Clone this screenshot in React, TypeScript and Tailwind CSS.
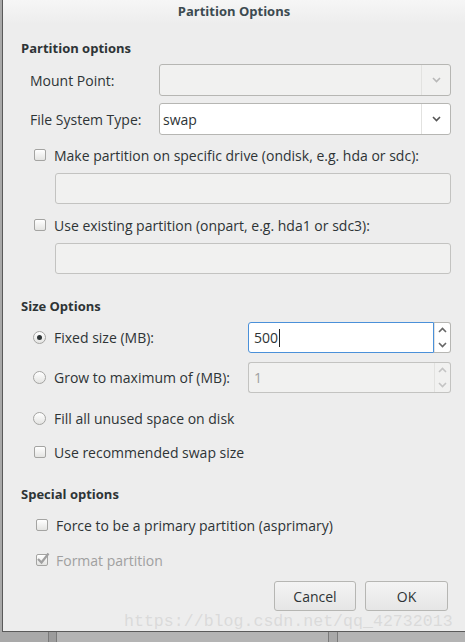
import React from "react"

const font = { fontFamily: "'Open Sans', 'Noto Sans', sans-serif" }

function Chevron({ up = false, color = "#555" }: { up?: boolean; color?: string }) {
  return (
    <svg width="9" height="6" viewBox="0 0 9 6" className="block">
      <path
        d={up ? "M1 5 L4.5 1.5 L8 5" : "M1 1 L4.5 4.5 L8 1"}
        fill="none"
        stroke={color}
        strokeWidth="1.6"
      />
    </svg>
  )
}

function Combo({ value, disabled }: { value?: string; disabled?: boolean }) {
  return (
    <div
      className={`flex h-full flex-1 items-stretch rounded-[3px] border border-[#b6b6b3] ${
        disabled ? "bg-[#f1f1f0]" : "bg-white"
      }`}
    >
      <div className="flex flex-1 items-center px-[3px] text-[#2e3436]">{value}</div>
      <div className="flex w-[29px] items-center justify-center border-l border-[#e2e2e0]">
        <Chevron color={disabled ? "#b8b8b8" : "#555"} />
      </div>
    </div>
  )
}

function CheckBox({ checked, disabled }: { checked?: boolean; disabled?: boolean }) {
  return (
    <div className="relative h-[12px] w-[12px] shrink-0 rounded-[2px] border border-[#a4a4a2] bg-gradient-to-b from-white to-[#e4e4e2]">
      {checked && (
        <svg
          width="14"
          height="13"
          viewBox="0 0 14 13"
          className="absolute left-[-1px] top-[-3px]"
        >
          <path
            d="M2 7 L5.5 10.5 L12.5 1.5"
            fill="none"
            stroke={disabled ? "#a0a0a0" : "#333"}
            strokeWidth="2.2"
          />
        </svg>
      )}
    </div>
  )
}

function Radio({ checked }: { checked?: boolean }) {
  return (
    <div className="flex h-[13px] w-[13px] shrink-0 items-center justify-center rounded-full border border-[#a4a4a2] bg-gradient-to-b from-white to-[#e4e4e2]">
      {checked && <div className="h-[5px] w-[5px] rounded-full bg-[#2e3436]" />}
    </div>
  )
}

function Spin({ value, focused, disabled }: { value: string; focused?: boolean; disabled?: boolean }) {
  return (
    <div className="flex h-full w-[203px] items-stretch">
      <div
        className={`flex flex-1 items-center rounded-l-[3px] border pl-[5px] ${
          focused
            ? "border-[#4a90d9] bg-white text-[#2e3436]"
            : "border-r-0 border-[#c3c3c1] bg-[#f1f1f0] text-[#a0a0a0]"
        }`}
      >
        {value}
        {focused && <span className="ml-[1px] inline-block h-[18px] w-[1px] bg-[#222]" />}
      </div>
      <div
        className={`flex w-[17px] flex-col rounded-r-[3px] border border-l-0 ${
          focused ? "border-[#b6b6b3] bg-white" : "border-[#c3c3c1] bg-[#f1f1f0]"
        }`}
      >
        <div className="flex flex-1 items-center justify-center border-l border-[#e2e2e0]">
          <Chevron up color={disabled ? "#c4c4c4" : "#666"} />
        </div>
        <div className="flex flex-1 items-center justify-center border-l border-[#e2e2e0]">
          <Chevron color={disabled ? "#c4c4c4" : "#666"} />
        </div>
      </div>
    </div>
  )
}

function Entry() {
  return <div className="ml-[52px] h-[31px] w-[396px] rounded-[3px] border border-[#c3c3c1] bg-[#f1f1f0]" />
}

function Heading({ children, mt }: { children: React.ReactNode; mt: string }) {
  return (
    <div className={`${mt} ml-[18px] h-[20px] text-[13px] font-bold leading-[20px] text-[#2e3436]`}>
      {children}
    </div>
  )
}

export default function App() {
  return (
    <div className="relative h-[642px] w-[465px] overflow-hidden bg-[#a9a9a9]" style={font}>
      {/* background window peeking out below the dialog */}
      <div className="absolute bottom-0 left-[48px] h-[12px] w-[9px] border-x border-[#7a7a7a] bg-[#9c9c9c]" />
      <div className="absolute bottom-0 left-[57px] h-[12px] w-[272px] border-r border-[#7a7a7a] bg-[#b4b4b4]" />
      <div className="absolute bottom-0 left-[337px] h-[12px] w-[128px] border-l border-[#7a7a7a] bg-[#b4b4b4]" />

      <div className="relative ml-[2px] flex h-[632px] w-[463px] flex-col border-b border-l border-[#5a5a5a] bg-[#ededed] text-[14px] text-[#2e3436]">
        <div className="flex h-[24px] items-center justify-center bg-gradient-to-b from-[#f6f6f6] to-[#ededed] text-[13px] font-bold text-[#3c4a50]">
          Partition Options
        </div>

        <Heading mt="mt-[14px]">Partition options</Heading>

        <div className="mt-[6px] flex h-[32px] items-center pr-[14px]">
          <div className="w-[156px] pl-[27px]">Mount Point:</div>
          <Combo disabled />
        </div>
        <div className="mt-[7px] flex h-[32px] items-center pr-[14px]">
          <div className="w-[156px] pl-[27px]">File System Type:</div>
          <Combo value="swap" />
        </div>

        <div className="mt-[10px] flex h-[20px] items-center gap-[8px] pl-[31px]">
          <CheckBox />
          <span>Make partition on specific drive (ondisk, e.g. hda or sdc):</span>
        </div>
        <div className="mt-[8px]">
          <Entry />
        </div>
        <div className="mt-[11px] flex h-[20px] items-center gap-[8px] pl-[31px]">
          <CheckBox />
          <span>Use existing partition (onpart, e.g. hda1 or sdc3):</span>
        </div>
        <div className="mt-[8px]">
          <Entry />
        </div>

        <Heading mt="mt-[22px]">Size Options</Heading>

        <div className="mt-[6px] flex h-[31px] items-center pl-[30px]">
          <Radio checked />
          <span className="ml-[8px] w-[194px]">Fixed size (MB):</span>
          <Spin value="500" focused />
        </div>
        <div className="mt-[9px] flex h-[31px] items-center pl-[30px]">
          <Radio />
          <span className="ml-[8px] w-[194px]">Grow to maximum of (MB):</span>
          <Spin value="1" disabled />
        </div>
        <div className="mt-[15px] flex h-[20px] items-center pl-[30px]">
          <Radio />
          <span className="ml-[8px]">Fill all unused space on disk</span>
        </div>
        <div className="mt-[14px] flex h-[20px] items-center gap-[8px] pl-[31px]">
          <CheckBox />
          <span>Use recommended swap size</span>
        </div>

        <Heading mt="mt-[22px]">Special options</Heading>

        <div className="mt-[11px] flex h-[20px] items-center gap-[8px] pl-[33px]">
          <CheckBox />
          <span>Force to be a primary partition (asprimary)</span>
        </div>
        <div className="mt-[15px] flex h-[20px] items-center gap-[8px] pl-[33px]">
          <CheckBox checked disabled />
          <span className="text-[#a0a0a0]">Format partition</span>
        </div>

        <div className="mt-[11px] flex h-[30px] justify-end gap-[9px] pr-[17px]">
          <button className="w-[82px] rounded-[3px] border border-[#b6b6b3] bg-gradient-to-b from-[#f4f4f4] to-[#e6e6e6] text-[#2e3436]">
            Cancel
          </button>
          <button className="w-[83px] rounded-[3px] border border-[#b6b6b3] bg-gradient-to-b from-[#f4f4f4] to-[#e6e6e6] text-[#2e3436]">
            OK
          </button>
        </div>
      </div>

      {/* watermark */}
      <div
        className="pointer-events-none absolute left-[124px] top-[610px] text-[16.6px] leading-[24px] text-[#d2d2d2]/70"
        style={{ fontFamily: "'Liberation Mono', 'DejaVu Sans Mono', monospace" }}
      >
        https://blog.csdn.net/qq_42732013
      </div>
    </div>
  )
}
